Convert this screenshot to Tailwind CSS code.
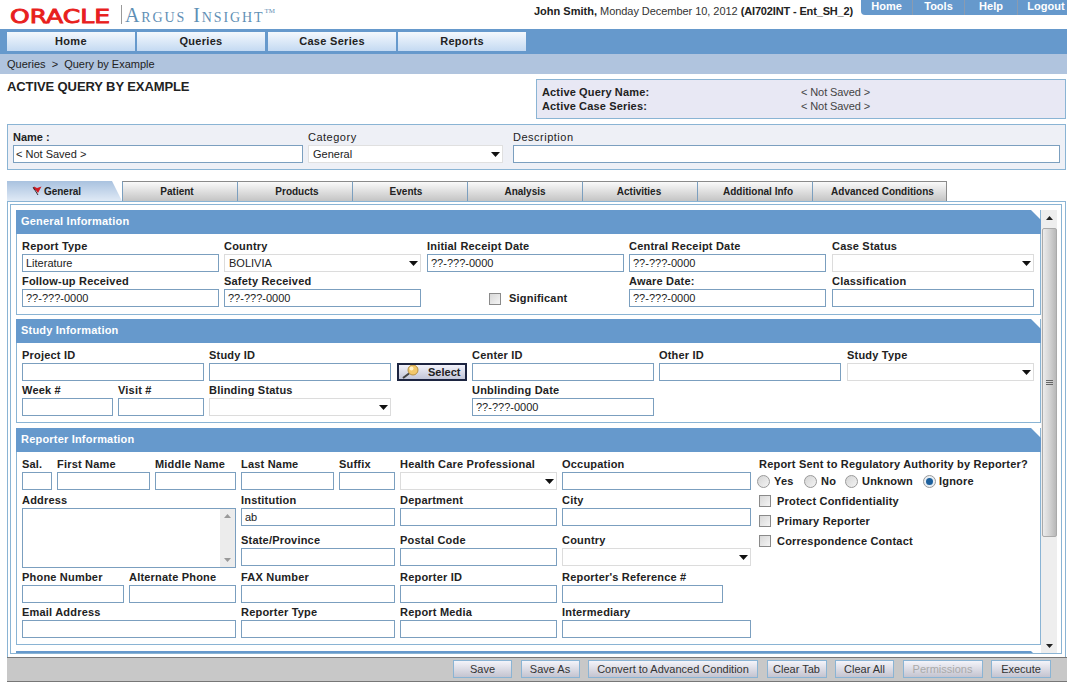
<!DOCTYPE html>
<html lang="en">
<head>
    <meta charset="UTF-8">
    <title>Argus Insight - Query by Example</title>
    <script src="https://cdn.jsdelivr.net/npm/@tailwindcss/browser@4"></script>
</head>
<body class="w-[1067px] h-[683px] overflow-hidden bg-white text-[11px] text-[#222] font-['Liberation_Sans',Arial,sans-serif] flex flex-col">

    <!-- top header -->
    <header class="h-[29px] flex shrink-0">
        <div class="w-[534px] relative flex">
            <svg class="absolute left-[9px] top-[1px]" width="108" height="27" viewBox="0 0 108 27">
                <text x="1" y="22" textLength="100" lengthAdjust="spacingAndGlyphs" font-family="DejaVu Sans" font-size="19.500" font-weight="400" stroke="#e8201c" stroke-width="0.900" fill="#e8201c">ORACLE</text>
            </svg>
            <div class="absolute left-[121px] top-[5px] w-px h-[19px] bg-[#9a9a9a]"></div>
            <div class="absolute left-[125px] top-[2px] text-[20px] tracking-[1.900px] leading-[26px] text-[#5f8fb5] font-['Liberation_Serif',serif] [font-variant:small-caps] whitespace-nowrap">Argus Insight<sup class="text-[7px] tracking-normal top-[-9px] relative align-baseline">TM</sup></div>
        </div>
        <div class="w-[327px] pt-[4px] leading-[14px] whitespace-nowrap"><b>John Smith,</b> <span class="text-[#333] tracking-[-0.050px]">Monday December 10, 2012</span> <b class="tracking-[-0.150px]">(AI702INT - Ent_SH_2)</b></div>
        <nav class="flex h-[15px] w-[206px] bg-[#6699cc] rounded-bl-[4px] text-white font-bold leading-[13px] text-center">
            <a class="w-[52px] border-r border-[#8a9bb0]">Home</a>
            <a class="w-[52px] border-r border-[#8a9bb0]">Tools</a>
            <a class="w-[53px] border-r border-[#8a9bb0]">Help</a>
            <a class="w-[49px] pl-[7px] whitespace-nowrap">Logout</a>
        </nav>
    </header>

    <!-- main nav -->
    <nav class="h-[25px] shrink-0 bg-[#6699cc] pl-[7px] pt-[3px] flex text-[11px] font-bold tracking-[0.3px]">
        <a class="w-[128px] h-[19px] leading-[19px] text-center bg-gradient-to-b from-[#f4f8fd] to-[#c4daf2]">Home</a>
        <a class="w-[128px] h-[19px] ml-[2px] leading-[19px] text-center bg-gradient-to-b from-[#f4f8fd] to-[#c4daf2]">Queries</a>
        <a class="w-[128px] h-[19px] ml-[3px] leading-[19px] text-center bg-gradient-to-b from-[#f4f8fd] to-[#c4daf2]">Case Series</a>
        <a class="w-[128px] h-[19px] ml-[2px] leading-[19px] text-center bg-gradient-to-b from-[#f4f8fd] to-[#c4daf2]">Reports</a>
    </nav>

    <div class="h-[20px] shrink-0 bg-[#b0c4de] pl-[7px] leading-[20px] text-[#222]">Queries &nbsp;&gt;&nbsp; Query by Example</div>

    <!-- page title + active query -->
    <div class="h-[50px] shrink-0 flex justify-between pl-[7px] pr-px pt-[5px]">
        <h1 class="text-[13px] font-bold leading-[16px] tracking-[-0.1px]">ACTIVE QUERY BY EXAMPLE</h1>
        <div class="w-[530px] h-[40px] border border-[#8ab4d4] bg-[#e8e8f4] pl-[5px] pt-[5px] leading-[14px]">
            <div class="flex"><b class="w-[259px] tracking-[0.15px]">Active Query Name:</b><span class="text-[#444] tracking-[-0.1px]">&lt; Not Saved &gt;</span></div>
            <div class="flex"><b class="w-[259px] tracking-[0.15px]">Active Case Series:</b><span class="text-[#444] tracking-[-0.1px]">&lt; Not Saved &gt;</span></div>
        </div>
    </div>

    <!-- name / category / description -->
    <div class="h-[46px] shrink-0 ml-[7px] mr-px border border-[#8ab4d4] bg-[#eef0f6] px-[5px] flex [&_label]:block [&_label]:h-[15px] [&_label]:leading-[15px] [&_label]:mt-[5px] [&_input]:h-[18px] [&_input]:w-full [&_input]:bg-white [&_input]:border [&_input]:border-[#7b9fbf] [&_input]:px-[2px] [&_input]:outline-none">
        <div class="w-[290px]"><label class="font-bold">Name :</label><input value="&lt; Not Saved &gt;"></div>
        <div class="w-[195px] ml-[5px]"><label class="tracking-[0.5px]">Category</label>
            <div class="h-[18px] bg-white border border-[#e0e0e0] pl-[4px] leading-[16px] flex justify-between items-center">General<svg class="mr-[2px]" width="9" height="5"><path d="M0 0h9L4.500 5z" fill="#111"/></svg></div>
        </div>
        <div class="w-[547px] ml-[10px]"><label class="tracking-[0.5px]">Description</label><input></div>
    </div>

    <!-- tabs -->
    <div class="h-[20px] shrink-0 mt-[11px] ml-[7px] flex font-bold text-center leading-[19px] text-[10px]">
        <a class="w-[115px] bg-gradient-to-b from-[#a9c2df] to-[#e0eaf6] [clip-path:polygon(0_0,105px_0,100%_100%,0_100%)] pr-[17px] flex justify-center items-center gap-px">
            <svg width="12" height="12" viewBox="0 0 12 12"><path d="M2 4L3 1.500 6 3 10.500 1.500 7 8 5 5.500z" fill="#d01c24"/><path d="M2 2l5 8" stroke="#333" stroke-width="1" fill="none"/></svg>General</a>
        <a class="w-[115px] pr-[6px] border-t border-l border-[#8a8a8a] border-l-[#7b9fbf] bg-gradient-to-b from-[#fafafa] to-[#c4c4c4]">Patient</a>
        <a class="w-[115px] pl-[4px] border-t border-l border-[#8a8a8a] border-l-[#7b9fbf] bg-gradient-to-b from-[#fafafa] to-[#c4c4c4]">Products</a>
        <a class="w-[115px] pr-[8px] border-t border-l border-[#8a8a8a] border-l-[#7b9fbf] bg-gradient-to-b from-[#fafafa] to-[#c4c4c4]">Events</a>
        <a class="w-[115px] border-t border-l border-[#8a8a8a] border-l-[#7b9fbf] bg-gradient-to-b from-[#fafafa] to-[#c4c4c4]">Analysis</a>
        <a class="w-[115px] pr-[2px] border-t border-l border-[#8a8a8a] border-l-[#7b9fbf] bg-gradient-to-b from-[#fafafa] to-[#c4c4c4]">Activities</a>
        <a class="w-[115px] pl-[6px] border-t border-l border-[#8a8a8a] border-l-[#7b9fbf] bg-gradient-to-b from-[#fafafa] to-[#c4c4c4]">Additional Info</a>
        <a class="w-[135px] pl-[6px] border-t border-x border-[#8a8a8a] border-l-[#7b9fbf] bg-gradient-to-b from-[#fafafa] to-[#c4c4c4]">Advanced Conditions</a>
    </div>

    <!-- tab panel -->
    <div class="h-[456px] shrink-0 ml-[7px] mr-px border border-b-0 border-[#8ab4d4] pl-[2px] pr-[3px] pt-[2px]">
        <div class="h-[450px] border border-[#8ab4d4] pl-[5px] pr-[4px] pt-[5px] flex overflow-hidden">
            <div class="w-[1025px] shrink-0 overflow-hidden font-bold tracking-[0.2px] [&_input]:h-[18px] [&_input]:mb-px [&_input]:w-full [&_input]:border [&_input]:border-[#7b9fbf] [&_input]:px-[3px] [&_input]:font-normal [&_input]:tracking-normal [&_input]:outline-none [&_label]:block [&_label]:h-[16px] [&_label]:leading-[16px] [&_label]:whitespace-nowrap">

                <!-- general information -->
                <section class="mb-[4px] border-x border-b border-[#8ab4d4]">
                    <h2 class="h-[24px] -mx-px pl-[5px] leading-[23px] text-white font-bold bg-[#6699cc] [clip-path:polygon(0_0,calc(100%-10px)_0,100%_10px,100%_100%,0_100%)]">General Information</h2>
                    <div class="pl-[5px] pt-[4px] pb-[6px]">
                        <div class="flex gap-[5px]">
                            <div class="w-[197px]"><label>Report Type</label><input value="Literature"></div>
                            <div class="w-[197px]"><label>Country</label>
                                <div class="h-[18px] mb-px border border-[#dcdcdc] pl-[4px] leading-[16px] font-normal tracking-normal flex justify-between items-center">BOLIVIA<svg class="mr-[2px]" width="9" height="5"><path d="M0 0h9L4.500 5z" fill="#111"/></svg></div>
                            </div>
                            <div class="w-[197px] ml-px"><label>Initial Receipt Date</label><input value="??-???-0000"></div>
                            <div class="w-[197px]"><label>Central Receipt Date</label><input value="??-???-0000"></div>
                            <div class="w-[202px] ml-px"><label>Case Status</label>
                                <div class="h-[18px] mb-px border border-[#dcdcdc] flex justify-end items-center"><svg class="mr-[2px]" width="9" height="5"><path d="M0 0h9L4.500 5z" fill="#111"/></svg></div>
                            </div>
                        </div>
                        <div class="flex gap-[5px]">
                            <div class="w-[197px]"><label>Follow-up Received</label><input value="??-???-0000"></div>
                            <div class="w-[197px]"><label>Safety Received</label><input value="??-???-0000"></div>
                            <div class="w-[197px] ml-px pt-[16px] pl-[62px] flex items-center gap-[8px]">
                                <span class="w-[12px] h-[12px] border border-[#8a8a8a] bg-gradient-to-br from-[#d8d8d8] to-[#f4f4f4]"></span>Significant
                            </div>
                            <div class="w-[197px]"><label>Aware Date:</label><input value="??-???-0000"></div>
                            <div class="w-[202px] ml-px"><label>Classification</label><input></div>
                        </div>
                    </div>
                </section>

                <!-- study information -->
                <section class="mb-[5px] border-x border-b border-[#8ab4d4]">
                    <h2 class="h-[24px] -mx-px pl-[5px] leading-[23px] text-white font-bold bg-[#6699cc] [clip-path:polygon(0_0,calc(100%-10px)_0,100%_10px,100%_100%,0_100%)]">Study Information</h2>
                    <div class="pl-[5px] pt-[4px] pb-[5px]">
                        <div class="flex gap-[5px]">
                            <div class="w-[182px]"><label>Project ID</label><input></div>
                            <div class="w-[182px]"><label>Study ID</label><input></div>
                            <div class="w-[70px] ml-px pt-[16px]">
                                <button class="w-full h-[18px] border-2 border-[#1c2440] bg-gradient-to-b from-[#f2f2fa] to-[#c2c6d8] flex items-center pl-[3px] gap-[9px] font-bold tracking-normal">
                                    <svg width="17" height="14" viewBox="0 0 17 14"><circle cx="11" cy="5" r="5" fill="#f2c86a" stroke="#b89040"/><circle cx="9.500" cy="3.500" r="2" fill="#fff3cc"/><path d="M7 8.500L1 13" stroke="#444" stroke-width="2"/></svg>Select
                                </button>
                            </div>
                            <div class="w-[182px]"><label>Center ID</label><input></div>
                            <div class="w-[182px]"><label>Other ID</label><input></div>
                            <div class="w-[187px] ml-px"><label>Study Type</label>
                                <div class="h-[18px] mb-px border border-[#dcdcdc] flex justify-end items-center"><svg class="mr-[2px]" width="9" height="5"><path d="M0 0h9L4.500 5z" fill="#111"/></svg></div>
                            </div>
                        </div>
                        <div class="flex gap-[5px]">
                            <div class="w-[91px]"><label>Week #</label><input></div>
                            <div class="w-[86px]"><label>Visit #</label><input></div>
                            <div class="w-[182px]"><label>Blinding Status</label>
                                <div class="h-[18px] mb-px border border-[#dcdcdc] flex justify-end items-center"><svg class="mr-[2px]" width="9" height="5"><path d="M0 0h9L4.500 5z" fill="#111"/></svg></div>
                            </div>
                            <div class="w-[182px] ml-[76px]"><label>Unblinding Date</label><input value="??-???-0000"></div>
                        </div>
                    </div>
                </section>

                <!-- reporter information -->
                <section class="mb-[6px] border-x border-b border-[#8ab4d4]">
                    <h2 class="h-[24px] -mx-px pl-[5px] leading-[23px] text-white font-bold bg-[#6699cc] [clip-path:polygon(0_0,calc(100%-10px)_0,100%_10px,100%_100%,0_100%)]">Reporter Information</h2>
                    <div class="pl-[5px] pt-[4px] pb-[5px] flex">
                        <div class="w-[729px] shrink-0">
                            <div class="flex gap-[5px]">
                                <div class="w-[30px]"><label>Sal.</label><input></div>
                                <div class="w-[93px]"><label>First Name</label><input></div>
                                <div class="w-[81px]"><label>Middle Name</label><input></div>
                                <div class="w-[93px]"><label>Last Name</label><input></div>
                                <div class="w-[56px]"><label>Suffix</label><input></div>
                                <div class="w-[157px]"><label>Health Care Professional</label>
                                    <div class="h-[18px] mb-px border border-[#dcdcdc] flex justify-end items-center"><svg class="mr-[2px]" width="9" height="5"><path d="M0 0h9L4.500 5z" fill="#111"/></svg></div>
                                </div>
                                <div class="w-[189px]"><label>Occupation</label><input></div>
                            </div>
                            <div class="flex gap-[5px] mt-px">
                                <div class="w-[214px]"><label>Address</label>
                                    <div class="h-[60px] border border-[#7b9fbf] flex justify-end">
                                        <div class="w-[15px] bg-[#ececec] flex flex-col justify-between items-center py-[5px]">
                                            <svg width="7" height="4"><path d="M0 4h7L3.500 0z" fill="#999"/></svg>
                                            <svg width="7" height="4"><path d="M0 0h7L3.500 4z" fill="#999"/></svg>
                                        </div>
                                    </div>
                                </div>
                                <div class="w-[510px]">
                                    <div class="flex gap-[5px]">
                                        <div class="w-[154px]"><label>Institution</label><input value="ab"></div>
                                        <div class="w-[157px]"><label>Department</label><input></div>
                                        <div class="w-[189px]"><label>City</label><input></div>
                                    </div>
                                    <div class="flex gap-[5px] mt-[5px]">
                                        <div class="w-[154px]"><label>State/Province</label><input></div>
                                        <div class="w-[157px]"><label>Postal Code</label><input></div>
                                        <div class="w-[189px]"><label>Country</label>
                                            <div class="h-[18px] mb-px border border-[#dcdcdc] flex justify-end items-center"><svg class="mr-[2px]" width="9" height="5"><path d="M0 0h9L4.500 5z" fill="#111"/></svg></div>
                                        </div>
                                    </div>
                                </div>
                            </div>
                            <div class="flex gap-[5px] mt-px">
                                <div class="w-[102px]"><label>Phone Number</label><input></div>
                                <div class="w-[107px]"><label>Alternate Phone</label><input></div>
                                <div class="w-[154px]"><label>FAX Number</label><input></div>
                                <div class="w-[157px]"><label>Reporter ID</label><input></div>
                                <div class="w-[161px]"><label>Reporter's Reference #</label><input></div>
                            </div>
                            <div class="flex gap-[5px]">
                                <div class="w-[214px]"><label>Email Address</label><input></div>
                                <div class="w-[154px]"><label>Reporter Type</label><input></div>
                                <div class="w-[157px]"><label>Report Media</label><input></div>
                                <div class="w-[189px]"><label>Intermediary</label><input></div>
                            </div>
                        </div>
                        <div class="ml-[8px] w-[280px]">
                            <div class="h-[16px] leading-[16px] whitespace-nowrap">Report Sent to Regulatory Authority by Reporter?</div>
                            <div class="flex items-center h-[18px] -ml-[2px]">
                                <span class="w-[13px] h-[13px] rounded-full border border-[#999] bg-gradient-to-br from-[#d4d4d4] to-[#f4f4f4]"></span><span class="ml-[4px] w-[30px]">Yes</span>
                                <span class="w-[13px] h-[13px] rounded-full border border-[#999] bg-gradient-to-br from-[#d4d4d4] to-[#f4f4f4]"></span><span class="ml-[4px] w-[24px]">No</span>
                                <span class="w-[13px] h-[13px] rounded-full border border-[#999] bg-gradient-to-br from-[#d4d4d4] to-[#f4f4f4]"></span><span class="ml-[4px] w-[61px]">Unknown</span>
                                <span class="w-[13px] h-[13px] rounded-full border border-[#999] bg-[#e8eef4] flex items-center justify-center"><span class="w-[7px] h-[7px] rounded-full bg-[#1c5f9c]"></span></span><span class="ml-[3px]">Ignore</span>
                            </div>
                            <div class="flex items-center h-[20px] mt-px gap-[6px]"><span class="w-[12px] h-[12px] border border-[#8a8a8a] bg-gradient-to-br from-[#d8d8d8] to-[#f4f4f4]"></span>Protect Confidentiality</div>
                            <div class="flex items-center h-[20px] gap-[6px]"><span class="w-[12px] h-[12px] border border-[#8a8a8a] bg-gradient-to-br from-[#d8d8d8] to-[#f4f4f4]"></span>Primary Reporter</div>
                            <div class="flex items-center h-[20px] gap-[6px]"><span class="w-[12px] h-[12px] border border-[#8a8a8a] bg-gradient-to-br from-[#d8d8d8] to-[#f4f4f4]"></span>Correspondence Contact</div>
                        </div>
                    </div>
                </section>

                <div class="h-[10px] bg-[#6699cc] [clip-path:polygon(0_0,calc(100%-10px)_0,100%_10px,100%_100%,0_100%)]"></div>
            </div>

            <!-- scrollbar -->
            <div class="w-[16px] h-[443px] shrink-0 bg-[#eeeeee] flex flex-col items-center">
                <div class="h-[18px] pb-[2px] flex items-center"><svg width="7" height="4"><path d="M0 4h7L3.500 0z" fill="#222"/></svg></div>
                <div class="w-[15px] h-[309px] border border-[#aaa] rounded-[2px] bg-gradient-to-r from-[#ececec] via-[#d4d4d4] to-[#b8b8b8] flex flex-col items-center justify-center gap-px">
                    <span class="w-[7px] h-px bg-[#666]"></span><span class="w-[7px] h-px bg-[#666]"></span><span class="w-[7px] h-px bg-[#666]"></span>
                </div>
                <div class="mt-auto h-[14px] flex items-center"><svg width="7" height="4"><path d="M0 0h7L3.500 4z" fill="#222"/></svg></div>
            </div>
        </div>
    </div>

    <!-- footer actions -->
    <footer class="h-[25px] shrink-0 ml-[7px] border-y border-[#777] bg-[#c8c8c8] flex justify-end items-start pt-[2px] gap-[8.500px] pr-[16px] text-[#333]">
        <button class="w-[59px] h-[18px] border border-[#8ab4d4] bg-gradient-to-b from-[#f4f4fa] to-[#c4c4d0]">Save</button>
        <button class="w-[59px] h-[18px] border border-[#8ab4d4] bg-gradient-to-b from-[#f4f4fa] to-[#c4c4d0]">Save As</button>
        <button class="w-[170px] h-[18px] border border-[#8ab4d4] bg-gradient-to-b from-[#f4f4fa] to-[#c4c4d0]">Convert to Advanced Condition</button>
        <button class="w-[60px] h-[18px] border border-[#8ab4d4] bg-gradient-to-b from-[#f4f4fa] to-[#c4c4d0]">Clear Tab</button>
        <button class="w-[59px] h-[18px] border border-[#8ab4d4] bg-gradient-to-b from-[#f4f4fa] to-[#c4c4d0]">Clear All</button>
        <button class="w-[80px] h-[18px] border border-[#8ab4d4] bg-gradient-to-b from-[#f4f4fa] to-[#c4c4d0] text-[#aaa]">Permissions</button>
        <button class="w-[60px] h-[18px] border border-[#8ab4d4] bg-gradient-to-b from-[#f4f4fa] to-[#c4c4d0]">Execute</button>
    </footer>
</body>
</html>
